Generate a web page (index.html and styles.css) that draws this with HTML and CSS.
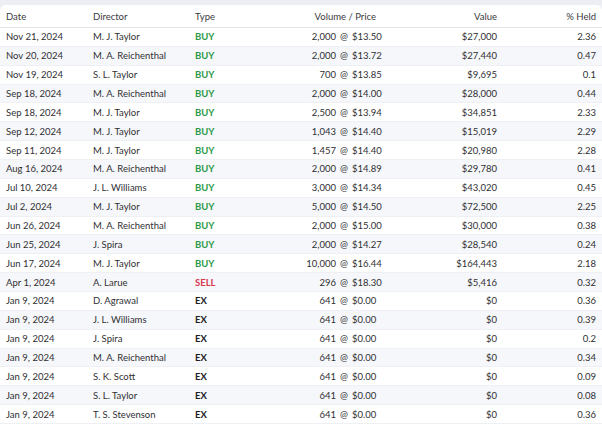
FILE: index.html
```html
<!DOCTYPE html>
<html>
<head>
<meta charset="utf-8">
<link rel="stylesheet" href="styles.css">
</head>
<body>
<div class="card">
  <div class="row head">
    <div>Date</div><div>Director</div><div>Type</div>
    <div class="vp-head">Volume / Price</div>
    <div class="r">Value</div><div class="r">% Held</div>
  </div>
  <div class="row"><div>Nov 21, 2024</div><div>M. J. Taylor</div><div class="buy">BUY</div><div class="vp"><span class="vol">2,000</span><span class="at">@</span><span>$13.50</span></div><div class="r">$27,000</div><div class="r">2.36</div></div>
  <div class="row"><div>Nov 20, 2024</div><div>M. A. Reichenthal</div><div class="buy">BUY</div><div class="vp"><span class="vol">2,000</span><span class="at">@</span><span>$13.72</span></div><div class="r">$27,440</div><div class="r">0.47</div></div>
  <div class="row"><div>Nov 19, 2024</div><div>S. L. Taylor</div><div class="buy">BUY</div><div class="vp"><span class="vol">700</span><span class="at">@</span><span>$13.85</span></div><div class="r">$9,695</div><div class="r">0.1</div></div>
  <div class="row"><div>Sep 18, 2024</div><div>M. A. Reichenthal</div><div class="buy">BUY</div><div class="vp"><span class="vol">2,000</span><span class="at">@</span><span>$14.00</span></div><div class="r">$28,000</div><div class="r">0.44</div></div>
  <div class="row"><div>Sep 18, 2024</div><div>M. J. Taylor</div><div class="buy">BUY</div><div class="vp"><span class="vol">2,500</span><span class="at">@</span><span>$13.94</span></div><div class="r">$34,851</div><div class="r">2.33</div></div>
  <div class="row"><div>Sep 12, 2024</div><div>M. J. Taylor</div><div class="buy">BUY</div><div class="vp"><span class="vol">1,043</span><span class="at">@</span><span>$14.40</span></div><div class="r">$15,019</div><div class="r">2.29</div></div>
  <div class="row"><div>Sep 11, 2024</div><div>M. J. Taylor</div><div class="buy">BUY</div><div class="vp"><span class="vol">1,457</span><span class="at">@</span><span>$14.40</span></div><div class="r">$20,980</div><div class="r">2.28</div></div>
  <div class="row"><div>Aug 16, 2024</div><div>M. A. Reichenthal</div><div class="buy">BUY</div><div class="vp"><span class="vol">2,000</span><span class="at">@</span><span>$14.89</span></div><div class="r">$29,780</div><div class="r">0.41</div></div>
  <div class="row"><div>Jul 10, 2024</div><div>J. L. Williams</div><div class="buy">BUY</div><div class="vp"><span class="vol">3,000</span><span class="at">@</span><span>$14.34</span></div><div class="r">$43,020</div><div class="r">0.45</div></div>
  <div class="row"><div>Jul 2, 2024</div><div>M. J. Taylor</div><div class="buy">BUY</div><div class="vp"><span class="vol">5,000</span><span class="at">@</span><span>$14.50</span></div><div class="r">$72,500</div><div class="r">2.25</div></div>
  <div class="row"><div>Jun 26, 2024</div><div>M. A. Reichenthal</div><div class="buy">BUY</div><div class="vp"><span class="vol">2,000</span><span class="at">@</span><span>$15.00</span></div><div class="r">$30,000</div><div class="r">0.38</div></div>
  <div class="row"><div>Jun 25, 2024</div><div>J. Spira</div><div class="buy">BUY</div><div class="vp"><span class="vol">2,000</span><span class="at">@</span><span>$14.27</span></div><div class="r">$28,540</div><div class="r">0.24</div></div>
  <div class="row"><div>Jun 17, 2024</div><div>M. J. Taylor</div><div class="buy">BUY</div><div class="vp"><span class="vol">10,000</span><span class="at">@</span><span>$16.44</span></div><div class="r">$164,443</div><div class="r">2.18</div></div>
  <div class="row"><div>Apr 1, 2024</div><div>A. Larue</div><div class="sell">SELL</div><div class="vp"><span class="vol">296</span><span class="at">@</span><span>$18.30</span></div><div class="r">$5,416</div><div class="r">0.32</div></div>
  <div class="row"><div>Jan 9, 2024</div><div>D. Agrawal</div><div class="ex">EX</div><div class="vp"><span class="vol">641</span><span class="at">@</span><span>$0.00</span></div><div class="r">$0</div><div class="r">0.36</div></div>
  <div class="row"><div>Jan 9, 2024</div><div>J. L. Williams</div><div class="ex">EX</div><div class="vp"><span class="vol">641</span><span class="at">@</span><span>$0.00</span></div><div class="r">$0</div><div class="r">0.39</div></div>
  <div class="row"><div>Jan 9, 2024</div><div>J. Spira</div><div class="ex">EX</div><div class="vp"><span class="vol">641</span><span class="at">@</span><span>$0.00</span></div><div class="r">$0</div><div class="r">0.2</div></div>
  <div class="row"><div>Jan 9, 2024</div><div>M. A. Reichenthal</div><div class="ex">EX</div><div class="vp"><span class="vol">641</span><span class="at">@</span><span>$0.00</span></div><div class="r">$0</div><div class="r">0.34</div></div>
  <div class="row"><div>Jan 9, 2024</div><div>S. K. Scott</div><div class="ex">EX</div><div class="vp"><span class="vol">641</span><span class="at">@</span><span>$0.00</span></div><div class="r">$0</div><div class="r">0.09</div></div>
  <div class="row"><div>Jan 9, 2024</div><div>S. L. Taylor</div><div class="ex">EX</div><div class="vp"><span class="vol">641</span><span class="at">@</span><span>$0.00</span></div><div class="r">$0</div><div class="r">0.08</div></div>
  <div class="row"><div>Jan 9, 2024</div><div>T. S. Stevenson</div><div class="ex">EX</div><div class="vp"><span class="vol">641</span><span class="at">@</span><span>$0.00</span></div><div class="r">$0</div><div class="r">0.36</div></div>
</div>
</body>
</html>
```

FILE: styles.css
```css
html, body {
  margin: 0;
  padding: 0;
  background: #eceef3;
}
body {
  font-family: Lato, "Open Sans", sans-serif;
  font-size: 9.5px;
  color: #2f2f33;
  padding-top: 5px;
}
.card {
  background: #ffffff;
  border-radius: 6px 6px 0 0;
  overflow: hidden;
}
.row {
  display: grid;
  grid-template-columns: 87px 102px 55px 133px 114px 99px;
  padding: 0 6px;
  height: 18.86px;
  align-items: center;
  border-bottom: 1px solid #eef0f3;
  box-sizing: border-box;
}
.row:nth-child(odd) {
  background: #f6f7fa;
}
.row.head {
  height: 23px;
  background: #ffffff;
  color: #3a3a40;
  border-bottom: 1px solid #e3e5ea;
}
.r { text-align: right; }
.vp-head { text-align: right; padding-right: 7px; }
.vp {
  display: grid;
  grid-template-columns: 1fr 8px 31px;
  column-gap: 4px;
  align-items: center;
}
.vol { text-align: right; }
.at { text-align: center; }
.buy { color: #2c9a4b; font-weight: 700; }
.sell { color: #d8394f; font-weight: 700; }
.ex { color: #202024; font-weight: 700; }
```
